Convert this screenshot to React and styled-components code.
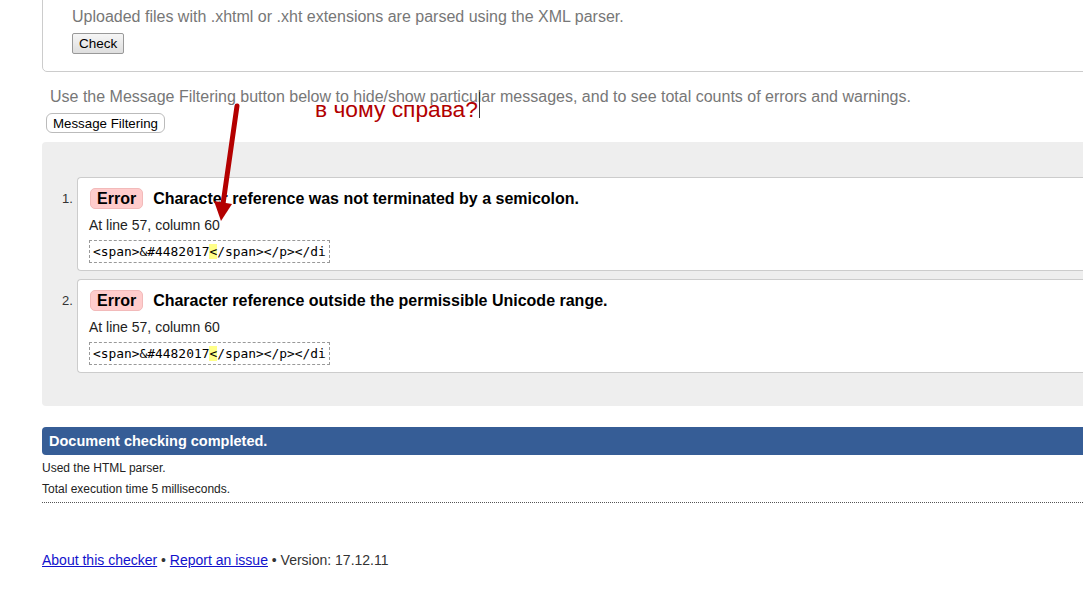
import styled, { createGlobalStyle } from "styled-components";

const GlobalStyle = createGlobalStyle`
  html, body {
    margin: 0;
    padding: 0;
    background: #fff;
    overflow: hidden;
  }
  body {
    font-family: "Liberation Sans", Arial, sans-serif;
    color: #000;
  }
`;

const Page = styled.div`
  position: relative;
  display: flow-root;
  margin: 0 -40px 0 42px;
`;

const Fieldset = styled.div`
  margin-top: -20px;
  padding: 27px 0 17px 29px;
  border: 1px solid #ccc;
  border-radius: 0 0 0 5px;
`;

const Note = styled.p`
  margin: 0;
  font-size: 16px;
  line-height: 18px;
  color: #777;
  padding-left: ${({ $indent }) => $indent || 0}px;
`;

const Button = styled.button`
  font-family: "Liberation Sans", Arial, sans-serif;
  font-size: ${({ $small }) => ($small ? "13.3px" : "13.5px")};
  color: #000;
  height: ${({ $small }) => ($small ? "20px" : "21px")};
  padding: 0 6px;
  border: 1px solid ${({ $small }) => ($small ? "#bbb" : "#999")};
  border-radius: ${({ $small }) => ($small ? "6px" : "2px")};
  background: ${({ $small }) =>
    $small ? "#fff" : "linear-gradient(#f6f6f6, #dedede)"};
  margin: ${({ $small }) => ($small ? "7px 0 0 4px" : "7px 0 0 0")};
  display: block;
`;

const Intro = styled.div`
  margin-top: 16px;
`;

const Results = styled.ol`
  margin: 9px 0 0;
  padding: 35px 0 33px 20px;
  background: #eee;
  border-radius: 4px 0 0 4px;
  list-style: none;
  display: flex;
  flex-direction: column;
  gap: 8px;
`;

const Item = styled.li`
  display: flex;
  align-items: flex-start;
`;

const Num = styled.span`
  width: 15px;
  padding-top: 14px;
  font-size: 13px;
  color: #333;
  flex-shrink: 0;
`;

const Card = styled.div`
  flex: 1;
  background: #fff;
  border: 1px solid #ccc;
  border-right: none;
  border-radius: 4px 0 0 4px;
  padding: 10px 0 7px 11px;
`;

const Heading = styled.p`
  margin: 0;
  display: flex;
  align-items: center;
  gap: 10px;
  font-size: 16px;
  font-weight: bold;
  line-height: 21px;
`;

const Badge = styled.span`
  display: inline-block;
  margin-left: 1px;
  background: #fcc;
  border: 1px solid #f2baba;
  border-radius: 5px;
  padding: 0 6px;
  line-height: 19px;
`;

const Location = styled.p`
  margin: 7px 0 0;
  font-size: 14px;
  line-height: 18px;
  color: #222;
`;

const Extract = styled.code`
  display: inline-block;
  margin-top: 6px;
  border: 1px dashed #999;
  padding: 2px 3px;
  font-family: "DejaVu Sans Mono", monospace;
  font-size: 12.9px;
  line-height: 17px;
  color: #000;
  white-space: pre;
`;

const Mark = styled.b`
  font-weight: normal;
  background: #ff8;
`;

const Status = styled.div`
  margin-top: 21px;
  background: #365d96;
  color: #fff;
  font-weight: bold;
  font-size: 14.5px;
  line-height: 28px;
  padding-left: 7px;
  border-radius: 4px 0 0 4px;
`;

const Details = styled.div`
  padding-top: 6px;
  padding-bottom: 6px;
  border-bottom: 1px dotted #555;
  display: flex;
  flex-direction: column;
  gap: 7px;
  font-size: 12px;
  line-height: 14px;
  color: #222;
`;

const Footer = styled.p`
  margin: 48px 0 0;
  font-size: 14px;
  line-height: 18px;
  color: #333;
  a {
    color: #11c;
  }
`;

const Annotation = styled.div`
  position: absolute;
  left: 273px;
  top: 96px;
  display: flex;
  align-items: flex-start;
  gap: 1px;
  color: #b20000;
  font-size: 22.8px;
  line-height: 26px;
  &::after {
    content: "";
    width: 1px;
    height: 26px;
    margin-top: -4px;
    background: #333;
  }
`;

const Arrow = styled.svg`
  position: absolute;
  left: 150px;
  top: 96px;
`;

const messages = [
  "Character reference was not terminated by a semicolon.",
  "Character reference outside the permissible Unicode range.",
];

export default function App() {
  return (
    <>
      <GlobalStyle />
      <Page>
        <Fieldset>
          <Note>
            Uploaded files with .xhtml or .xht extensions are parsed using the
            XML parser.
          </Note>
          <Button>Check</Button>
        </Fieldset>
        <Intro>
          <Note $indent={8}>
            Use the Message Filtering button below to hide/show particular
            messages, and to see total counts of errors and warnings.
          </Note>
          <Button $small>Message Filtering</Button>
        </Intro>
        <Results>
          {messages.map((msg, i) => (
            <Item key={i}>
              <Num>{i + 1}.</Num>
              <Card>
                <Heading>
                  <Badge>Error</Badge>
                  <span>{msg}</span>
                </Heading>
                <Location>At line 57, column 60</Location>
                <Extract>
                  {"<span>&#4482017"}
                  <Mark>{"<"}</Mark>
                  {"/span></p></di"}
                </Extract>
              </Card>
            </Item>
          ))}
        </Results>
        <Status>Document checking completed.</Status>
        <Details>
          <span>Used the HTML parser.</span>
          <span>Total execution time 5 milliseconds.</span>
        </Details>
        <Footer>
          <a href="#">About this checker</a> • <a href="#">Report an issue</a> •
          Version: 17.12.11
        </Footer>
        <Annotation>в чому справа?</Annotation>
        <Arrow width="60" height="130" viewBox="0 0 60 130">
          <line
            x1="45"
            y1="10"
            x2="31"
            y2="108"
            stroke="#b40000"
            strokeWidth="5"
            strokeLinecap="round"
          />
          <polygon points="22,105 40,108 29,125" fill="#b40000" />
        </Arrow>
      </Page>
    </>
  );
}
